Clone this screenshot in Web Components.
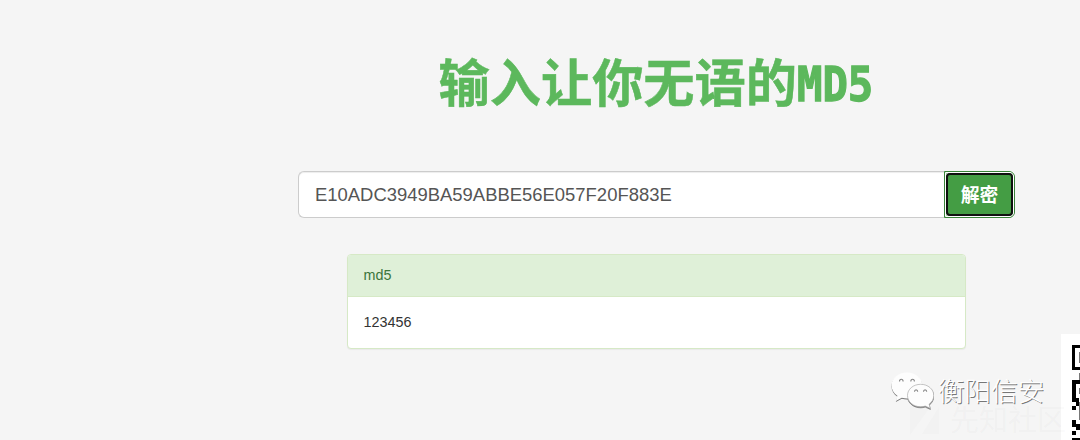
<!DOCTYPE html>
<html lang="zh-CN">
<head>
<meta charset="utf-8">
<title>MD5</title>
<style>
    body {
        margin: 0;
        height: 440px;
        overflow: hidden;
        position: relative;
        background: #f5f5f5;
        font-family: "Liberation Sans", "Noto Sans CJK SC", sans-serif;
    }
</style>
</head>
<body>
<md5-page>
    <page-title slot="title">输入让你无语的<span slot="latin">MD5</span></page-title>
    <search-bar value="E10ADC3949BA59ABBE56E057F20F883E">解密</search-bar>
    <result-panel><span slot="heading">md5</span>123456</result-panel>
</md5-page>
<community-mark>先知社区</community-mark>
<qr-corner></qr-corner>
<wechat-mark>衡阳信安</wechat-mark>

<script>
class Md5Page extends HTMLElement {
    constructor() {
        super();
        const shadow = this.attachShadow({ mode: 'open' });
        shadow.innerHTML = `
            <style>
                :host {
                    display: flex;
                    flex-direction: column;
                    width: 717.5px;
                    margin-left: 297.5px;
                    padding-top: 43px;
                }
            </style>
            <slot name="title"></slot>
            <slot></slot>
        `;
    }
}

class PageTitle extends HTMLElement {
    constructor() {
        super();
        const shadow = this.attachShadow({ mode: 'open' });
        shadow.innerHTML = `
            <style>
                :host { display: block; }
                h1 {
                    display: flex;
                    justify-content: center;
                    height: 75px;
                    margin: 0 0 53px;
                    color: #5cb85c;
                    font: bold 51.2px/75px "Noto Sans CJK SC", sans-serif;
                    -webkit-text-stroke: 0.5px #5cb85c;
                    white-space: nowrap;
                }
                .latin {
                    width: 77px;
                    padding-top: 4px;
                    font: bold 48px/75px "DejaVu Sans Mono", monospace;
                    -webkit-text-stroke: 1.3px #5cb85c;
                    transform: scaleX(0.88);
                    transform-origin: left;
                }
            </style>
            <h1><slot></slot><div class="latin"><slot name="latin"></slot></div></h1>
        `;
    }
}

class SearchBar extends HTMLElement {
    constructor() {
        super();
        const shadow = this.attachShadow({ mode: 'open' });
        shadow.innerHTML = `
            <style>
                :host {
                    display: flex;
                    height: 47px;
                    margin-bottom: 36px;
                }
                .field {
                    box-sizing: border-box;
                    flex: 1;
                    border: 1px solid #ccc;
                    border-right: 0;
                    border-radius: 6px 0 0 6px;
                    padding-left: 16.5px;
                    background: #fff;
                    box-shadow: inset 0 1px 1px rgba(0, 0, 0, 0.075);
                    color: #555;
                    font-size: 18.45px;
                    line-height: 45px;
                }
                button {
                    box-sizing: border-box;
                    width: 71px;
                    margin: 0;
                    padding: 0 0 2px;
                    border: 1px solid #398439;
                    border-radius: 0 6px 6px 0;
                    background: #449d44;
                    color: #fff;
                    font: bold 18.8px/43px "Noto Sans CJK SC", sans-serif;
                    position: relative;
                }
                /* focus ring with rounded corners inside the button */
                button::before {
                    content: "";
                    position: absolute;
                    inset: 0;
                    border: 1px solid #fff;
                    border-radius: 0 5px 5px 0;
                }
                button::after {
                    content: "";
                    position: absolute;
                    inset: 1px;
                    border: 2px solid #101010;
                    border-radius: 4px;
                    box-shadow: 0 0 0 1px #fff;
                }
            </style>
            <div class="field"></div>
            <button type="button"><slot></slot></button>
        `;
    }

    connectedCallback() {
        this.shadowRoot.querySelector('.field').textContent = this.getAttribute('value');
    }
}

class ResultPanel extends HTMLElement {
    constructor() {
        super();
        const shadow = this.attachShadow({ mode: 'open' });
        shadow.innerHTML = `
            <style>
                :host {
                    display: block;
                    box-sizing: border-box;
                    width: 618.5px;
                    height: 95px;
                    margin-left: 49.5px;
                    border: 1px solid #d6e9c6;
                    border-radius: 4px;
                    background: #fff;
                    box-shadow: 0 1px 1px rgba(0, 0, 0, 0.05);
                    overflow: hidden;
                    font-size: 14.35px;
                }
                .heading {
                    height: 41px;
                    padding-left: 15.5px;
                    border-bottom: 1px solid #d6e9c6;
                    background: #dff0d8;
                    color: #3c763d;
                    line-height: 41px;
                }
                .body {
                    padding-left: 15.5px;
                    color: #333;
                    line-height: 51px;
                }
            </style>
            <div class="heading"><slot name="heading"></slot></div>
            <div class="body"><slot></slot></div>
        `;
    }
}

class WechatMark extends HTMLElement {
    constructor() {
        super();
        const shadow = this.attachShadow({ mode: 'open' });
        shadow.innerHTML = `
            <style>
                :host {
                    position: absolute;
                    left: 890px;
                    top: 370px;
                    display: flex;
                    gap: 4px;
                    color: #fff;
                    font: 300 26.6px/40px "Noto Sans CJK SC", sans-serif;
                    text-shadow: 1px 1px 0.6px #777;
                    white-space: nowrap;
                }
                svg { flex: none; filter: drop-shadow(0 1px 0.7px #777); }
            </style>
            <svg width="44" height="42" viewBox="0 0 44 42">
                <path fill="#fdfdfd" d="M17 2.500C8.500 2.500 1.500 8.300 1.500 15.500c0 4.200 2.300 7.800 5.900 10.200L5.800 31l6-3.200c1.700.5 3.500.8 5.200.8 8.700 0 15.300-5.700 15.300-13.100S25.500 2.500 17 2.500z"/>
                <path fill="#fdfdfd" stroke="#aaa" stroke-width=".7" d="M30.700 14.300c-7.400 0-13.200 4.900-13.200 11.200s5.800 11.300 13.200 11.300c1.600 0 3.100-.3 4.500-.7l5.200 2.300-1.300-4.200c2.900-2.100 4.700-5.200 4.700-8.700 0-6.300-5.900-11.200-13.100-11.200z"/>
                <path fill="none" stroke="#888" stroke-width="1.100" d="M9.500 11.500c0-3 3.600-3 3.600 0M20.800 11.500c0-3 3.600-3 3.600 0M24.500 21.800c0-2.600 3.200-2.600 3.200 0M33.500 21.800c0-2.600 3.200-2.600 3.200 0"/>
            </svg>
            <span><slot></slot></span>
        `;
    }
}

class CommunityMark extends HTMLElement {
    constructor() {
        super();
        const shadow = this.attachShadow({ mode: 'open' });
        shadow.innerHTML = `
            <style>
                :host {
                    position: absolute;
                    z-index: 1;
                    left: 909px;
                    top: 401px;
                    display: flex;
                    gap: 10px;
                    color: rgba(130, 130, 130, 0.05);
                    font: 29px/34px "Noto Sans CJK SC", sans-serif;
                    white-space: nowrap;
                }
                svg { flex: none; opacity: 0.5; }
            </style>
            <svg width="31" height="36" viewBox="0 0 31 36">
                <path fill="currentColor" d="M1 5h21L1 34zM30 6v27H13z"/>
            </svg>
            <span><slot></slot></span>
        `;
    }
}

class QrCorner extends HTMLElement {
    constructor() {
        super();
        const shadow = this.attachShadow({ mode: 'open' });
        shadow.innerHTML = `
            <style>
                :host {
                    position: absolute;
                    right: 0;
                    bottom: 0;
                    width: 19px;
                    height: 106px;
                    overflow: hidden;
                    background: #fff;
                }
                svg { display: block; }
            </style>
            <svg width="19" height="106" viewBox="0 0 19 106" shape-rendering="crispEdges">
                <path d="M11 11h8v3h-5v19h5v3h-8zM11 46h8v4h-4v14h3v4h1v4h-4v-4h-4zM11 72h4v4h-4zM11 86h4v4h4v6h-4v-3h-4zM11 97h4v4h-4zM11 104h8v2h-8z"/>
                <path fill="#777" d="M18 18h1v11h-1zM18 39h1v7h-1zM18 54h1v6h-1zM18 68h1v18h-1z"/>
            </svg>
        `;
    }
}

customElements.define('md5-page', Md5Page);
customElements.define('page-title', PageTitle);
customElements.define('search-bar', SearchBar);
customElements.define('result-panel', ResultPanel);
customElements.define('wechat-mark', WechatMark);
customElements.define('community-mark', CommunityMark);
customElements.define('qr-corner', QrCorner);
</script>
</body>
</html>
